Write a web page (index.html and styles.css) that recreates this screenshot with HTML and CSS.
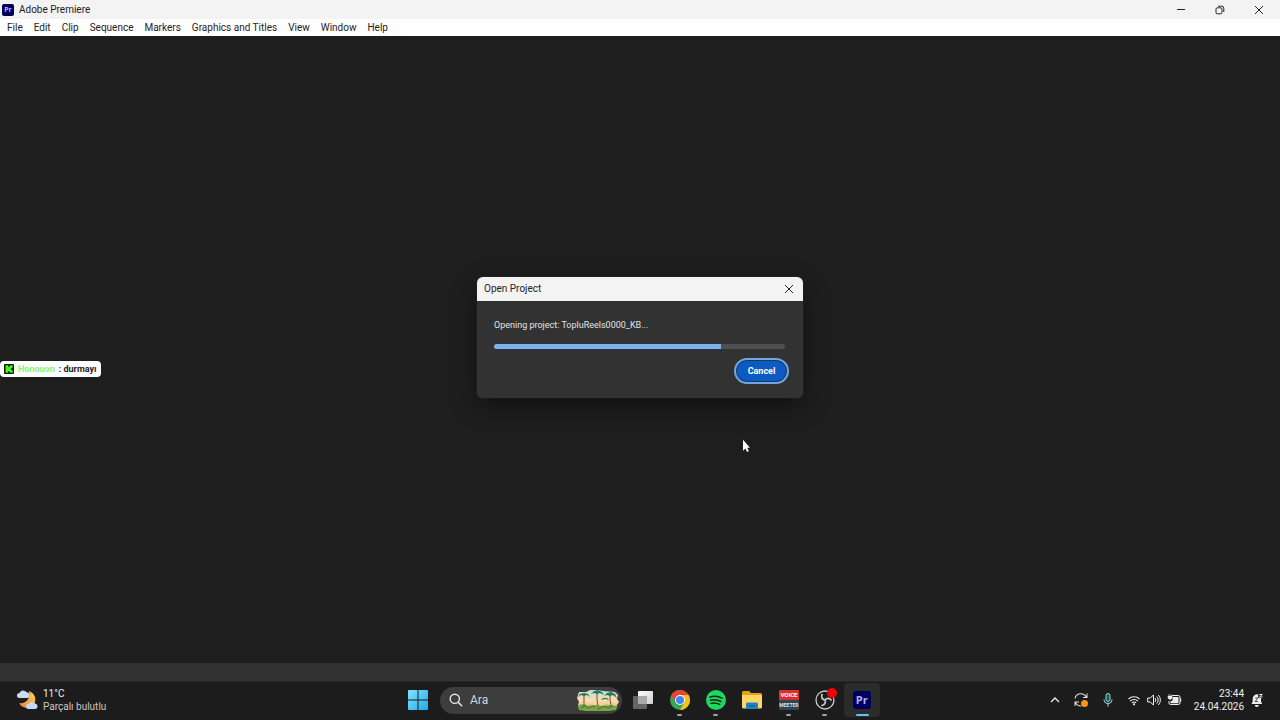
FILE: index.html
```html
<!DOCTYPE html>
<html lang="tr">
<head>
<meta charset="utf-8">
<title>Adobe Premiere</title>
<link rel="stylesheet" href="styles.css">
</head>
<body>
<div class="desktop">
  <header class="titlebar">
    <span class="pr-badge">Pr</span>
    <h1 class="app-title">Adobe Premiere</h1>
    <div class="window-controls">
      <button type="button" aria-label="Minimize"><svg width="10" height="10" viewBox="0 0 10 10"><path d="M1 4.500H9"/></svg></button>
      <button type="button" aria-label="Restore"><svg width="10" height="10" viewBox="0 0 10 10"><rect x="1" y="2.800" width="6" height="6" rx="1.300"/><path d="M3 1.200h3.800a2 2 0 0 1 2 2V7"/></svg></button>
      <button type="button" aria-label="Close"><svg width="10" height="10" viewBox="0 0 10 10"><path d="M1 1l8 8M9 1l-8 8"/></svg></button>
    </div>
  </header>
  <nav class="menubar">
    <button type="button">File</button>
    <button type="button">Edit</button>
    <button type="button">Clip</button>
    <button type="button">Sequence</button>
    <button type="button">Markers</button>
    <button type="button">Graphics and Titles</button>
    <button type="button">View</button>
    <button type="button">Window</button>
    <button type="button">Help</button>
  </nav>
  <main class="workspace">
    <section class="dialog" role="dialog" aria-labelledby="dialog-title">
      <div class="dialog-head">
        <h2 id="dialog-title">Open Project</h2>
        <button type="button" class="dialog-close" aria-label="Close"><svg width="10" height="10" viewBox="0 0 10 10"><path d="M1 1l8 8M9 1l-8 8"/></svg></button>
      </div>
      <div class="dialog-body">
        <label class="dialog-text" for="progress">Opening project: TopluReels0000_KB...</label>
        <progress class="bar" id="progress" value="78" max="100"></progress>
        <button type="button" class="cancel">Cancel</button>
      </div>
    </section>
    <div class="chat">
      <svg class="chat-icon" width="10" height="10" viewBox="0 0 10 10"><rect width="10" height="10" rx="1" fill="#071b05"/><path d="M1.500 1.200h2.800v1.700h1V2h1V1.200h2.400v2.500h-1v.8h-1v1h1v.8h1v2.500H6.300V8h-1v-.9h-1v1.700H1.500z" fill="#48f51e"/></svg>
      <span class="chat-name">Honouon</span><span class="chat-message">: durmayı</span>
    </div>
    <svg class="cursor" width="8" height="14" viewBox="0 0 8 14"><path d="M1 .8v11l2.500-2.400 1.600 3.500 1.700-.8-1.600-3.400H8z" fill="#fff"/></svg>
  </main>
  <div class="status"></div>
  <footer class="taskbar">
    <div class="weather">
      <svg width="22" height="22" viewBox="0 0 22 22">
        <defs><linearGradient id="moon" x1="1" y1="0" x2="0" y2="1"><stop offset="0" stop-color="#ffd45b"/><stop offset="1" stop-color="#ef8036"/></linearGradient></defs>
        <path d="M13 2c5 2 8 7 5.500 12C15.500 20 6 20.500 3 14c6 1.500 12-4 10-12z" fill="url(#moon)"/>
        <path d="M3.500 9a2.500 2.500 0 0 1 0-5 4 4 0 0 1 7-.8 3 3 0 0 1 1.200 5.800z" fill="#c9dcf8"/>
        <path d="M12.500 20a2.500 2.500 0 0 1 0-5 4 4 0 0 1 6.500-.5 2.800 2.800 0 0 1 .5 5.500z" fill="#c7d8f7"/>
      </svg>
      <div class="weather-text"><div>11°C</div><div class="weather-sky">Parçalı bulutlu</div></div>
    </div>
    <div class="center">
      <button type="button" class="start" aria-label="Start"><svg width="20" height="20" viewBox="0 0 20 20"><defs><linearGradient id="win" x1="0" y1="0" x2="1" y2="1"><stop offset="0" stop-color="#83e2ff"/><stop offset="1" stop-color="#22a8ee"/></linearGradient></defs><path d="M1 0h8.500v9.500H0V1a1 1 0 0 1 1-1zM10.500 0H19a1 1 0 0 1 1 1v8.500h-9.500zM0 10.500h9.500V20H1a1 1 0 0 1-1-1zM10.500 10.500H20V19a1 1 0 0 1-1 1h-8.500z" fill="url(#win)"/></svg></button>
      <label class="search">
        <svg width="14" height="14" viewBox="0 0 14 14"><circle cx="5.800" cy="5.800" r="4.600" fill="none" stroke="#e6e6e6" stroke-width="1.400"/><path d="M9.200 9.200l3.500 3.500" stroke="#e6e6e6" stroke-width="1.600" stroke-linecap="round"/></svg>
        <input type="text" placeholder="Ara" aria-label="Ara">
        <svg width="42" height="22" viewBox="0 0 42 22">
          <defs><linearGradient id="sky" x1="0" y1="0" x2="0" y2="1"><stop offset="0" stop-color="#b9ddd6"/><stop offset=".5" stop-color="#f8ddb0"/><stop offset="1" stop-color="#e8c079"/></linearGradient></defs>
          <path d="M2 3h7l4-2h8l5 1 12 1 3 3-1 4 2 3-2 3-1 4-6 1H10l-8-1-1-4 1-3-2-4z" fill="url(#sky)"/>
          <path d="M1 16l6-1 5 2 7-1 6 1 7-1 8 1-1 4-7 1H9l-7-1z" fill="#78a648"/>
          <path d="M7 17V6M21 17l-1-6V4M34 17l-1-7V6" fill="none" stroke="#76512f" stroke-width="1"/>
          <path d="M1 8l2-3 4-1 4 1 2 3-3-2-3 1-3-1zM14 5l3-3 4-1 4 2 2 3-4-2-3 1-3-1zM27 7l3-3 4-1 4 2 2 4-4-3-3 1-3-1zM24 11l2-2 4 0 2 2-4-1z" fill="#27765b"/>
          <path d="M4 19l4-2 3 2 5-2 5 3 6-3 4 2 5-2" fill="none" stroke="#4b8639" stroke-width="1.500"/>
          <path d="M12 16h2M18 19h2M29 16h2" stroke="#d5a951" stroke-width="1.200"/>
        </svg>
      </label>
      <div class="apps">
        <button type="button" aria-label="Task view"><svg width="22" height="22" viewBox="0 0 22 22"><defs><linearGradient id="tv" x1="0" y1="0" x2="1" y2="1"><stop offset="0" stop-color="#fff"/><stop offset="1" stop-color="#cfcfcf"/></linearGradient></defs><rect x="6" y="2" width="15" height="13" rx="1" fill="url(#tv)"/><rect x="1" y="7" width="14" height="13" rx="1" fill="#6e6e6e" fill-opacity=".9"/><path d="M6 7h9v8H6z" fill="#aaa"/></svg></button>
        <button type="button" class="running" aria-label="Chrome"><svg width="22" height="22" viewBox="0 0 22 22"><circle cx="11" cy="11" r="10" fill="#35a853"/><path d="M2.340 6A10 10 0 0 1 19.660 6L11 11 6.670 13.500z" fill="#e94335"/><path d="M19.660 6A10 10 0 0 1 11 21l4.330-7.500L11 6z" fill="#fbc116"/><circle cx="11" cy="11" r="5" fill="#fff"/><circle cx="11" cy="11" r="4" fill="#4285f4"/></svg></button>
        <button type="button" class="running" aria-label="Spotify"><svg width="22" height="22" viewBox="0 0 22 22"><circle cx="11" cy="11" r="10" fill="#1ed760"/><path d="M5 8c4-1.200 8.500-.8 12 1.200M5.500 11.300c3.500-1 7.300-.6 10.300 1.200M6 14.400c3-.8 6-.4 8.700 1" fill="none" stroke="#102515" stroke-width="1.500" stroke-linecap="round"/></svg></button>
        <button type="button" aria-label="File explorer"><svg width="22" height="22" viewBox="0 0 22 22"><path d="M1 3.500A1.500 1.500 0 0 1 2.500 2H8l2 2h9.500A1.500 1.500 0 0 1 21 5.500V9H1z" fill="#e2a21b"/><path d="M1 6h20v12a1.500 1.500 0 0 1-1.500 1.500h-17A1.500 1.500 0 0 1 1 18z" fill="#ffd566"/><path d="M5 19.500V15a1.500 1.500 0 0 1 1.500-1.500h9A1.500 1.500 0 0 1 17 15v4.500z" fill="#1683cb"/><path d="M8 17h6" stroke="#075b99" stroke-width="1.200"/></svg></button>
        <button type="button" class="running" aria-label="Voicemeeter"><span class="voice"><span class="voice-top">VOICE</span><span class="voice-bottom">MEETER</span></span></button>
        <button type="button" class="running" aria-label="OBS Studio"><svg width="24" height="24" viewBox="0 0 24 24"><circle cx="12" cy="12" r="9" fill="#1c1c1c" stroke="#ccc" stroke-width="1.300"/><path d="M12 12C9 11.500 8 9 9 6.500M12 12c2-2.500 4.500-2 6 0M12 12c1 2.500 0 4.500-3 5.500" fill="none" stroke="#ccc" stroke-width="1.700" stroke-linecap="round"/><circle cx="19" cy="5" r="5" fill="#f50008"/></svg></button>
        <button type="button" class="running active" aria-label="Adobe Premiere"><span class="pr-badge pr-large">Pr</span></button>
      </div>
    </div>
    <div class="tray">
      <button type="button" aria-label="Hidden icons"><svg width="10" height="10" viewBox="0 0 10 10"><path d="M1 7l4-4 4 4" fill="none" stroke="#eee" stroke-width="1.300"/></svg></button>
      <button type="button" aria-label="Updates"><svg width="16" height="16" viewBox="0 0 16 16"><path d="M2 6.500A6 6 0 0 1 13.200 5M14 1.500V5.500h-4M2 14v-4h4M2.500 10.500A6 6 0 0 0 8 14" fill="none" stroke="#ddd" stroke-width="1.100"/><circle cx="11.500" cy="11.500" r="3.500" fill="#f69413"/></svg></button>
      <button type="button" aria-label="Microphone"><svg width="12" height="16" viewBox="0 0 12 16"><rect x="4" y="1.500" width="4" height="8" rx="2" fill="#24565a" stroke="#8edadd"/><path d="M2 7.500a4 4 0 0 0 8 0M6 11.500V14.500" fill="none" stroke="#8edadd" stroke-width="1.100"/></svg></button>
      <button type="button" class="system" aria-label="Network, volume and battery">
        <svg width="14" height="14" viewBox="0 0 14 14"><path d="M1.500 6a7.800 7.800 0 0 1 11 0M3.200 8a5.400 5.400 0 0 1 7.600 0M5 9.900a2.800 2.800 0 0 1 4 0" fill="none" stroke="#eee" stroke-width="1.100"/><circle cx="7" cy="11.300" r="1.100" fill="#eee"/></svg>
        <svg width="14" height="14" viewBox="0 0 14 14"><path d="M.7 5h2.500L6.500 2v10L3.200 9H.7z" fill="none" stroke="#eee" stroke-width="1"/><path d="M8 5a3 3 0 0 1 0 4M9.700 3.500a5 5 0 0 1 0 7M11.300 2a7 7 0 0 1 0 10" fill="none" stroke="#eee" stroke-width="1"/></svg>
        <svg width="15" height="14" viewBox="0 0 15 14"><path d="M5 2.500h6.500A1.500 1.500 0 0 1 13 4v6a1.500 1.500 0 0 1-1.500 1.500h-8A1.500 1.500 0 0 1 2 10V8" fill="none" stroke="#eee"/><path d="M5.500 4h6v6.200h-8V8.500l2-1zM13.200 5.300h1v3.500h-1z" fill="#eee"/><path d="M2 1v2M4 1v2M1 3h4v2L3.500 6.500h-1L1 5z" fill="#eee" stroke="#eee" stroke-width=".5"/></svg>
      </button>
      <time class="clock" datetime="2026-04-24T23:44"><span>23:44</span><span>24.04.2026</span></time>
      <button type="button" class="bell" aria-label="Notifications"><svg width="14" height="14" viewBox="0 0 14 14"><path d="M1.500 11L2.700 8.500V5.500A4.300 4.300 0 0 1 8.200 1.500V5H11v3.500l1.200 2.500zM4.800 12h4a2 2 0 0 1-4 0z" fill="#eee"/><path d="M5.200 5h2.600L5.200 8.500h2.600" fill="none" stroke="#222" stroke-width=".8"/><path d="M9.300 1.500h3L9.500 4h3" fill="none" stroke="#eee"/></svg></button>
    </div>
  </footer>
</div>
</body>
</html>
```
FILE: styles.css
```css
* { box-sizing: border-box; }
body { margin: 0; font-family: Roboto, "Noto Sans", sans-serif; font-size: 10px; line-height: 12px; }
h1, h2 { margin: 0; font-size: inherit; font-weight: 400; }
button { padding: 0; border: 0; background: none; color: inherit; font: inherit; }
svg { display: block; flex: none; }

.desktop { display: flex; flex-direction: column; min-height: 100vh; background: #1e1e1e; }

.titlebar { display: flex; align-items: center; height: 19px; padding-left: 2px; background: #f3f3f3; color: #222; }
.pr-badge { display: flex; align-items: center; justify-content: center; width: 12px; height: 12px; border-radius: 2px; background: #00005b; color: #b3b0ff; font-family: "Open Sans", sans-serif; font-size: 7px; font-weight: 700; }
.app-title { margin-left: 5px; }
.window-controls { display: flex; margin-left: auto; }
.window-controls button { display: flex; align-items: center; justify-content: center; width: 39px; height: 18px; }
.window-controls svg, .dialog-close svg { fill: none; stroke: #222; stroke-width: 1; }
.window-controls button:last-child { margin-right: 2px; }

.menubar { display: flex; gap: 11px; align-items: center; height: 17px; padding-left: 7px; background: #fff; color: #222; }

.workspace { position: relative; flex: 1; background: #1e1e1e; }
.dialog { position: absolute; top: 241px; left: 50%; width: 326px; transform: translateX(-50%); overflow: hidden; border-radius: 6px; background: #323232; box-shadow: 0 8px 24px #0007, 0 0 1px #666; }
.dialog-head { display: flex; align-items: center; justify-content: space-between; height: 24px; padding: 0 8px 0 7px; background: #f3f3f3; color: #222; }
.dialog-close { padding: 1px; }
.dialog-body { display: flex; flex-direction: column; padding: 18px 14px 14px 17px; color: #e4e4e4; }
.dialog-text { font-size: 9px; line-height: 13px; }
.bar { width: calc(100% - 4px); height: 5px; margin: 12px 0 9px; overflow: hidden; appearance: none; border: 0; border-radius: 3px; background: #505050; }
.bar::-webkit-progress-bar { background: #505050; }
.bar::-webkit-progress-value { background: #78b3ed; }
.cancel { align-self: flex-end; width: 55px; height: 26px; border: 2px solid #6ea6e6; border-radius: 13px; background: #0a5cc4; box-shadow: inset 0 0 0 1px #25364d; color: #fff; font-weight: 700; font-size: 9px; }

.chat { position: absolute; top: 325px; left: 0; display: flex; align-items: center; height: 16px; padding: 0 5px 0 4px; border-radius: 4px; background: #fff; color: #222; font-weight: 700; font-size: 9px; }
.chat-name { margin: 0 4px; color: #82f77d; }
.cursor { position: absolute; top: 403px; left: 742px; }

.status { height: 18px; background: #323232; }
.taskbar { display: grid; grid-template-columns: 1fr 480px 1fr; height: 39px; border-top: 1px solid #262626; padding-bottom: 2px; background: #1c1c1c; color: #f0f0f0; }
.weather { display: flex; align-items: center; gap: 5px; padding-left: 16px; line-height: 13px; }
.weather-sky { color: #c8c8c8; }
.center { display: flex; align-items: center; }
.start { display: flex; justify-content: center; width: 36px; margin-right: 4px; }
.search { display: flex; align-items: center; width: 182px; height: 27px; padding: 0 3px 0 9px; border-radius: 14px; background: #3d3d3d; }
.search input { flex: 1; min-width: 0; padding: 0 7px; border: 0; outline: 0; background: none; color: #ddd; font: inherit; font-size: 12px; }
.search input::placeholder { color: #d5d5d5; opacity: 1; }
.apps { display: grid; flex: 1; grid-template-columns: repeat(7, 1fr); margin-left: 3px; }
.apps button { position: relative; display: flex; align-items: center; justify-content: center; height: 34px; border-radius: 4px; }
.running::after { position: absolute; bottom: 1px; left: 50%; width: 5px; height: 2px; margin-left: -3px; border-radius: 1px; background: #a0a0a0; content: ""; }
.apps .active { background: #2b2b2b; }
.active::after { width: 13px; margin-left: -6px; background: #60c5f2; }
.pr-large { width: 18px; height: 18px; border-radius: 3px; font-size: 11px; }
.voice { display: flex; flex-direction: column; width: 20px; font-family: Roboto, sans-serif; font-weight: 700; text-align: center; line-height: 10px; }
.voice-top { background: #d9302c; color: #fff; font-size: 6px; }
.voice-bottom { background: #33444d; color: #e0e0e0; font-size: 5px; }
.tray { display: flex; align-items: center; justify-content: flex-end; padding-right: 16px; }
.tray button { display: flex; align-items: center; }
.tray button + button { margin-left: 13px; }
.tray .system { gap: 6px; }
.clock { display: flex; flex-direction: column; margin: 0 6px 0 12px; text-align: right; line-height: 13px; }
```
